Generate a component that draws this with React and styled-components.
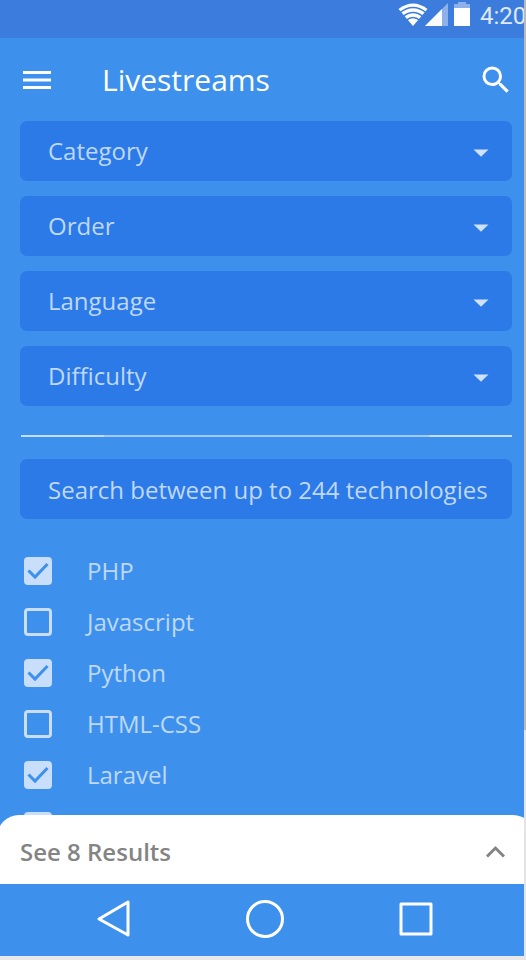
import React, { useState } from 'react';
import styled, { createGlobalStyle, ThemeProvider } from 'styled-components';

const theme = {
  primary: '#3d91ec',
  status: '#3c7cdc',
  field: '#2c7ae7',
  text: '#bfd8fa',
  light: '#c8defb',
  muted: '#848484',
  font: '"Open Sans", "Noto Sans", sans-serif',
};

const GlobalStyle = createGlobalStyle`
  * {
    box-sizing: border-box;
  }

  body {
    margin: 0;
    font-family: ${theme.font};
    background: #e8e8ea;
  }

  button, input, select {
    font: inherit;
  }
`;

const Screen = styled.div`
  display: flex;
  flex-direction: column;
  height: 100vh;
  padding-bottom: 4px;
  border-right: 2px solid;
  border-image: linear-gradient(#b9b9b9 76%, #e4e4e4 76%) 1;
  overflow: hidden;
`;

const Content = styled.div`
  display: flex;
  flex-direction: column;
  flex: 1;
  min-height: 0;
  overflow: hidden;
  background: ${(props) => props.theme.primary};
`;

const StatusBar = styled.div`
  display: flex;
  flex-shrink: 0;
  justify-content: flex-end;
  height: 38px;
  overflow: hidden;
  background: ${(props) => props.theme.status};
`;

const StatusIcons = styled.svg`
  flex-shrink: 0;
  width: 74px;
  height: 28px;
  margin-right: 8px;
`;

const Clock = styled.span`
  width: 44px;
  font: 24px/32px Roboto, sans-serif;
  color: #dfe9fa;
  white-space: nowrap;
`;

const Header = styled.header`
  display: flex;
  flex-shrink: 0;
  align-items: center;
  height: 83px;
  padding: 0 10px 0 20px;
`;

const IconButton = styled.button`
  display: flex;
  flex-shrink: 0;
  padding: 0;
  border: 0;
  background: none;
  color: #fff;
  cursor: pointer;
`;

const Title = styled.h1`
  flex: 1;
  margin: 0 0 0 49px;
  font-size: 30px;
  font-weight: 400;
  line-height: 40px;
  color: #fff;
`;

const Filters = styled.div`
  display: flex;
  flex-direction: column;
  flex-shrink: 0;
  gap: 15px;
  padding: 0 12px 0 20px;
`;

const SelectBox = styled.div`
  position: relative;

  svg {
    position: absolute;
    top: 28px;
    right: 23px;
    pointer-events: none;
  }
`;

const Select = styled.select`
  display: block;
  appearance: none;
  width: 100%;
  height: 60px;
  padding: 0 48px 2px 28px;
  border: 0;
  border-radius: 7px;
  font-size: 24px;
  color: ${(props) => props.theme.text};
  background: ${(props) => props.theme.field};
`;

const Divider = styled.hr`
  flex-shrink: 0;
  height: 2px;
  margin: 29px 12px 22px 21px;
  border: 0;
  background: linear-gradient(to right, #c4dcf9 17%, #a3c9f6 17% 83%, #c4dcf9 83%);
`;

const SearchBox = styled.div`
  flex-shrink: 0;
  padding: 0 12px 0 20px;
`;

const SearchInput = styled.input`
  display: block;
  width: 100%;
  height: 60px;
  padding: 0 20px 0 28px;
  border: 0;
  border-radius: 7px;
  font-size: 24px;
  color: ${(props) => props.theme.text};
  background: ${(props) => props.theme.field};

  &::placeholder {
    color: ${(props) => props.theme.text};
    opacity: 1;
  }
`;

const TechList = styled.ul`
  flex: 1;
  min-height: 0;
  margin: 0;
  padding: 26px 12px 0 24px;
  overflow: hidden;
  list-style: none;
`;

const TechItem = styled.label`
  display: flex;
  align-items: center;
  gap: 35px;
  height: 51px;
  font-size: 24px;
  color: ${(props) => props.theme.text};
  cursor: pointer;
`;

const CheckWrap = styled.span`
  display: grid;

  input, svg {
    grid-area: 1 / 1;
  }

  svg {
    pointer-events: none;
  }
`;

const Check = styled.input`
  appearance: none;
  width: 28px;
  height: 28px;
  margin: 0;
  border: 3px solid ${(props) => props.theme.light};
  border-radius: 4px;

  &:checked {
    background: ${(props) => props.theme.light};
  }
`;

const ResultsBar = styled.button`
  display: flex;
  flex-shrink: 0;
  align-items: center;
  justify-content: space-between;
  height: 69px;
  margin: 0 -11px 0 -3px;
  padding: 4px 30px 0 23px;
  border: 0;
  border-radius: 22px 22px 0 0;
  font-size: 24px;
  font-weight: 600;
  line-height: 32px;
  color: ${(props) => props.theme.muted};
  background: #fff;
  cursor: pointer;
`;

const NavBar = styled.nav`
  display: flex;
  flex-shrink: 0;
  align-items: center;
  justify-content: space-around;
  height: 72px;
  padding: 0 33px 2px 39px;
`;

const filters = ['Category', 'Order', 'Language', 'Difficulty'];

const initialTechs = [
  { id: 1, name: 'PHP', checked: true },
  { id: 2, name: 'Javascript', checked: false },
  { id: 3, name: 'Python', checked: true },
  { id: 4, name: 'HTML-CSS', checked: false },
  { id: 5, name: 'Laravel', checked: true },
  { id: 6, name: '', checked: false },
];

function Filter({ label }) {
  return (
    <SelectBox>
      <Select aria-label={label} defaultValue="">
        <option value="">{label}</option>
      </Select>
      <svg width="16" height="8" viewBox="0 0 16 8">
        <path d="M0.5 0.5h15L8 7.8z" fill="#cfe1fb" />
      </svg>
    </SelectBox>
  );
}

function App() {
  const [techs, setTechs] = useState(initialTechs);
  const [search, setSearch] = useState('');

  const toggle = (id) => {
    setTechs(techs.map((t) => (t.id === id ? { ...t, checked: !t.checked } : t)));
  };

  return (
    <ThemeProvider theme={theme}>
      <GlobalStyle />
      <Screen>
        <Content>
          <StatusBar>
            <StatusIcons viewBox="0 0 74 28">
              {/* wifi */}
              <path d="M0.5 9Q15 -2 29.500 9L15 26z" fill="#fff" />
              <g fill="none" stroke={theme.status} strokeWidth="1.500">
                <path d="M2 12.500Q15 2.500 28 12.500" />
                <path d="M5 16.500Q15 8.500 25 16.500" />
                <path d="M8 20.500Q15 14.500 22 20.500" />
              </g>
              {/* signal */}
              <path d="M27 26L50 3v23z" fill="#8fb1e9" />
              <path d="M27 26L44 9v17z" fill="#fbfbfd" />
              {/* battery */}
              <path d="M56 8V4h4V2h8v2h4v4z" fill="#8fb1e9" />
              <path d="M56 8h16v18H56z" fill="#fff" />
            </StatusIcons>
            <Clock>4:20</Clock>
          </StatusBar>

          <Header>
            <IconButton type="button" aria-label="Menu">
              <svg width="33" height="28" viewBox="0 0 33 28" fill="currentColor">
                <path d="M3 5h28v3H3zM3 12.500h28v3H3zM3 20h28v3H3z" />
              </svg>
            </IconButton>
            <Title>Livestreams</Title>
            <IconButton type="button" aria-label="Search">
              <svg width="36" height="36" viewBox="0 0 24 24" fill="currentColor">
                <path d="M15.500 14h-.79l-.28-.27A6.471 6.471 0 0 0 16 9.500 6.500 6.500 0 1 0 9.500 16c1.610 0 3.090-.59 4.230-1.570l.27.28v.79l5 4.990L20.490 19l-4.990-5zm-6 0C7.010 14 5 11.990 5 9.500S7.010 5 9.500 5 14 7.010 14 9.500 11.990 14 9.500 14z" />
              </svg>
            </IconButton>
          </Header>

          <Filters>
            {filters.map((label) => (
              <Filter key={label} label={label} />
            ))}
          </Filters>

          <Divider />

          <SearchBox>
            <SearchInput
              type="text" aria-label="Search technologies"
              placeholder="Search between up to 244 technologies"
              value={search} onChange={(e) => setSearch(e.target.value)}
            />
          </SearchBox>

          <TechList>
            {techs.map((tech) => (
              <li key={tech.id}>
                <TechItem>
                  <CheckWrap>
                    <Check
                      type="checkbox" aria-label={tech.name || 'Technology'}
                      checked={tech.checked} onChange={() => toggle(tech.id)}
                    />
                    {tech.checked && (
                      <svg width="28" height="28" viewBox="0 0 28 28">
                        <path d="M4.500 13.500L11 20L23.500 7" fill="none" stroke={theme.primary} strokeWidth="3" />
                      </svg>
                    )}
                  </CheckWrap>
                  {tech.name}
                </TechItem>
              </li>
            ))}
          </TechList>

          <ResultsBar type="button">
            See 8 Results
            <svg width="20" height="14" viewBox="0 0 20 14">
              <path d="M2 11.500L10.500 3L19 11.500" fill="none" stroke={theme.muted} strokeWidth="3" />
            </svg>
          </ResultsBar>

          <NavBar>
            <IconButton type="button" aria-label="Back">
              <svg width="40" height="40" viewBox="0 0 40 40" fill="none" stroke="currentColor" strokeWidth="3" strokeLinejoin="round">
                <path d="M5 20L34 3v33z" />
              </svg>
            </IconButton>
            <IconButton type="button" aria-label="Home">
              <svg width="40" height="40" viewBox="0 0 40 40" fill="none" stroke="currentColor" strokeWidth="3">
                <circle cx="20" cy="20" r="17.500" />
              </svg>
            </IconButton>
            <IconButton type="button" aria-label="Recent apps">
              <svg width="40" height="40" viewBox="0 0 40 40" fill="none" stroke="currentColor" strokeWidth="3" strokeLinejoin="round">
                <path d="M5 5h30v30H5z" />
              </svg>
            </IconButton>
          </NavBar>
        </Content>
      </Screen>
    </ThemeProvider>
  );
}

export default App;
